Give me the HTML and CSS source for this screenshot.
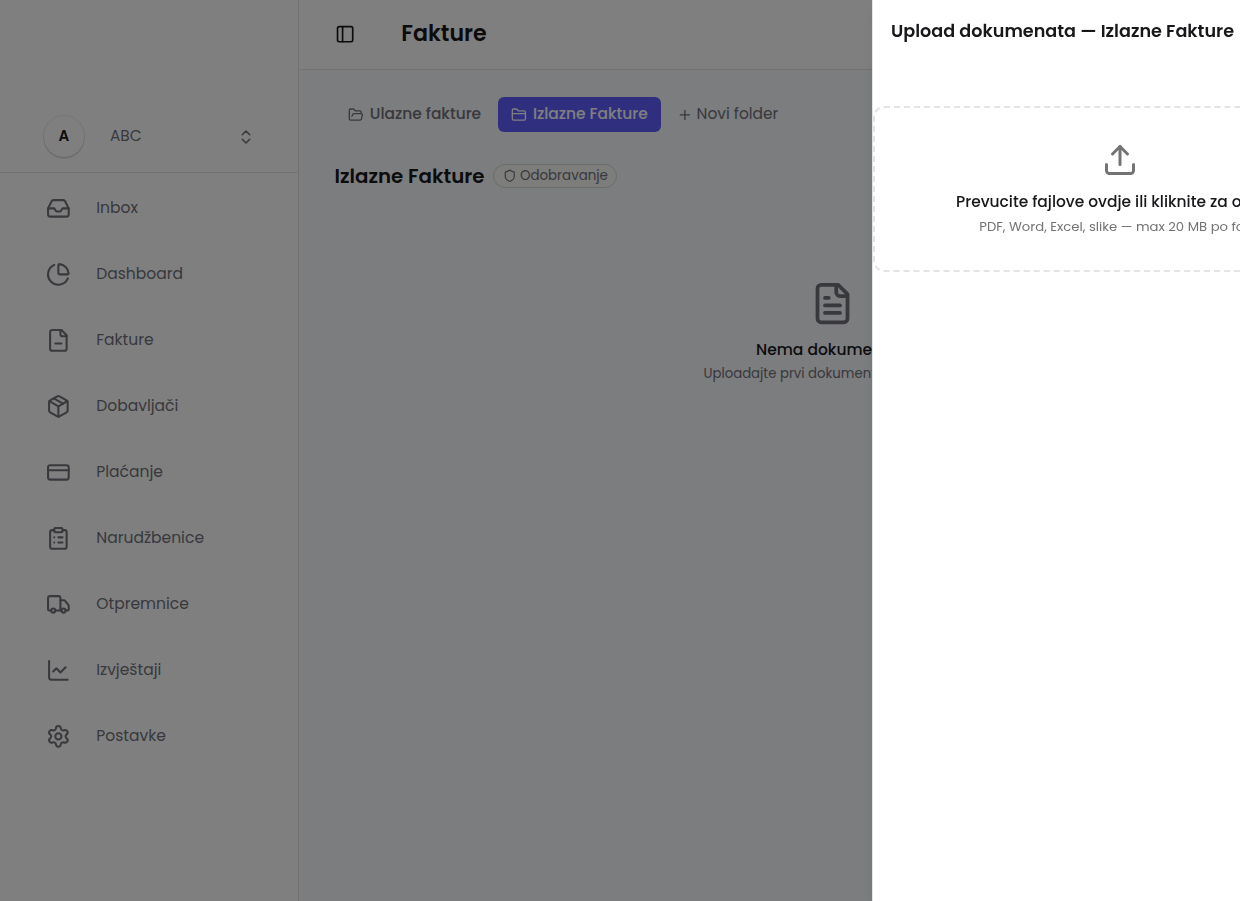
FILE: index.html
```
<!DOCTYPE html>
<html lang="bs">
<head>
    <meta charset="UTF-8">
    <meta name="viewport" content="width=device-width, initial-scale=1.0">
    <title>Fakture</title>
    <link rel="stylesheet" href="styles.css">
</head>
<body>
    <div class="app">
        <aside class="sidebar">
            <div class="company">
                <div class="avatar">A</div>
                <span class="company-name">ABC</span>
                <svg class="icon chevrons" viewBox="0 0 24 24"><path d="m7 15 5 5 5-5"/><path d="m7 9 5-5 5 5"/></svg>
            </div>
            <nav class="menu">
                <a class="menu-item">
                    <svg class="icon" viewBox="0 0 24 24"><path d="M22 12h-6l-2 3h-4l-2-3H2"/><path d="M5.45 5.11 2 12v6a2 2 0 0 0 2 2h16a2 2 0 0 0 2-2v-6l-3.45-6.89A2 2 0 0 0 16.76 4H7.24a2 2 0 0 0-1.79 1.11z"/></svg>
                    <span>Inbox</span>
                </a>
                <a class="menu-item">
                    <svg class="icon" viewBox="0 0 24 24"><path d="M21 12c.552 0 1.005-.449.95-.998a10 10 0 0 0-8.953-8.951c-.55-.055-.998.398-.998.95v8a1 1 0 0 0 1 1z"/><path d="M21.21 15.89A10 10 0 1 1 8 2.83"/></svg>
                    <span>Dashboard</span>
                </a>
                <a class="menu-item">
                    <svg class="icon" viewBox="0 0 24 24"><path d="M15 2H6a2 2 0 0 0-2 2v16a2 2 0 0 0 2 2h12a2 2 0 0 0 2-2V7z"/><path d="M14 2v4a2 2 0 0 0 2 2h4"/><path d="M9 15h6"/></svg>
                    <span>Fakture</span>
                </a>
                <a class="menu-item">
                    <svg class="icon" viewBox="0 0 24 24"><path d="M11 21.73a2 2 0 0 0 2 0l7-4A2 2 0 0 0 21 16V8a2 2 0 0 0-1-1.73l-7-4a2 2 0 0 0-2 0l-7 4A2 2 0 0 0 3 8v8a2 2 0 0 0 1 1.73z"/><path d="M12 22V12"/><path d="m3.3 7 8.7 5 8.7-5"/><path d="m7.5 4.27 9 5.15"/></svg>
                    <span>Dobavljači</span>
                </a>
                <a class="menu-item">
                    <svg class="icon" viewBox="0 0 24 24"><rect x="2" y="5" width="20" height="14" rx="2"/><path d="M2 10h20"/></svg>
                    <span>Plaćanje</span>
                </a>
                <a class="menu-item">
                    <svg class="icon" viewBox="0 0 24 24"><rect x="8" y="2" width="8" height="4" rx="1"/><path d="M16 4h2a2 2 0 0 1 2 2v14a2 2 0 0 1-2 2H6a2 2 0 0 1-2-2V6a2 2 0 0 1 2-2h2"/><path d="M12 11h4"/><path d="M12 16h4"/><path d="M8 11h.01"/><path d="M8 16h.01"/></svg>
                    <span>Narudžbenice</span>
                </a>
                <a class="menu-item">
                    <svg class="icon" viewBox="0 0 24 24"><path d="M14 18V6a2 2 0 0 0-2-2H4a2 2 0 0 0-2 2v11a1 1 0 0 0 1 1h2"/><path d="M15 18H9"/><path d="M19 18h2a1 1 0 0 0 1-1v-3.65a1 1 0 0 0-.22-.624l-3.48-4.35A1 1 0 0 0 17.52 8H14"/><circle cx="17" cy="18" r="2"/><circle cx="7" cy="18" r="2"/></svg>
                    <span>Otpremnice</span>
                </a>
                <a class="menu-item">
                    <svg class="icon" viewBox="0 0 24 24"><path d="M3 3v16a2 2 0 0 0 2 2h16"/><path d="m19 9-5 5-4-4-3 3"/></svg>
                    <span>Izvještaji</span>
                </a>
                <a class="menu-item">
                    <svg class="icon" viewBox="0 0 24 24"><path d="M9.671 4.136a2.34 2.34 0 0 1 4.659 0 2.34 2.34 0 0 0 3.319 1.915 2.34 2.34 0 0 1 2.33 4.033 2.34 2.34 0 0 0 0 3.831 2.34 2.34 0 0 1-2.33 4.033 2.34 2.34 0 0 0-3.319 1.915 2.34 2.34 0 0 1-4.659 0 2.34 2.34 0 0 0-3.32-1.915 2.34 2.34 0 0 1-2.33-4.033 2.34 2.34 0 0 0 0-3.831A2.34 2.34 0 0 1 6.35 6.051a2.34 2.34 0 0 0 3.319-1.915"/><circle cx="12" cy="12" r="3"/></svg>
                    <span>Postavke</span>
                </a>
            </nav>
        </aside>

        <main class="main">
            <header class="topbar">
                <svg class="icon toggle" viewBox="0 0 24 24"><rect x="3" y="3" width="18" height="18" rx="2"/><path d="M9 3v18"/></svg>
                <h1>Fakture</h1>
            </header>

            <section class="content">
                <div class="tabs">
                    <button class="tab">
                        <svg class="icon" viewBox="0 0 24 24"><path d="m6 14 1.5-2.9A2 2 0 0 1 9.24 10H20a2 2 0 0 1 1.94 2.5l-1.54 6a2 2 0 0 1-1.95 1.5H4a2 2 0 0 1-2-2V5a2 2 0 0 1 2-2h3.9a2 2 0 0 1 1.69.9l.81 1.2a2 2 0 0 0 1.67.9H18a2 2 0 0 1 2 2v2"/></svg>
                        <span>Ulazne fakture</span>
                    </button>
                    <button class="tab active">
                        <svg class="icon" viewBox="0 0 24 24"><path d="M20 20a2 2 0 0 0 2-2V8a2 2 0 0 0-2-2h-7.9a2 2 0 0 1-1.69-.9L9.6 3.9A2 2 0 0 0 7.93 3H4a2 2 0 0 0-2 2v13a2 2 0 0 0 2 2Z"/><path d="M2 10h20"/></svg>
                        <span>Izlazne Fakture</span>
                    </button>
                    <button class="tab new-folder">
                        <svg class="icon" viewBox="0 0 24 24"><path d="M5 12h14"/><path d="M12 5v14"/></svg>
                        <span>Novi folder</span>
                    </button>
                </div>

                <div class="folder-title">
                    <h2>Izlazne Fakture</h2>
                    <span class="badge">
                        <svg class="icon" viewBox="0 0 24 24"><path d="M20 13c0 5-3.5 7.5-7.66 8.95a1 1 0 0 1-.67-.01C7.5 20.5 4 18 4 13V6a1 1 0 0 1 1-1c2 0 4.5-1.2 6.24-2.72a1.17 1.17 0 0 1 1.52 0C14.51 3.81 17 5 19 5a1 1 0 0 1 1 1z"/></svg>
                        Odobravanje
                    </span>
                </div>

                <div class="empty">
                    <svg class="icon" viewBox="0 0 24 24"><path d="M15 2H6a2 2 0 0 0-2 2v16a2 2 0 0 0 2 2h12a2 2 0 0 0 2-2V7z"/><path d="M14 2v4a2 2 0 0 0 2 2h4"/><path d="M10 9H8"/><path d="M16 13H8"/><path d="M16 17H8"/></svg>
                    <p class="empty-title">Nema dokumenata</p>
                    <p class="empty-text">Uploadajte prvi dokument u ovaj folder</p>
                </div>
            </section>
        </main>
    </div>

    <div class="overlay"></div>

    <div class="drawer">
        <h2 class="drawer-title">Upload dokumenata — Izlazne Fakture</h2>
        <div class="dropzone">
            <svg class="icon" viewBox="0 0 24 24"><path d="M12 3v12"/><path d="m17 8-5-5-5 5"/><path d="M21 15v4a2 2 0 0 1-2 2H5a2 2 0 0 1-2-2v-4"/></svg>
            <p class="drop-title">Prevucite fajlove ovdje ili kliknite za odabir</p>
            <p class="drop-text">PDF, Word, Excel, slike — max 20 MB po fajlu</p>
        </div>
    </div>
</body>
</html>
```
FILE: styles.css
```
* {
    margin: 0;
    padding: 0;
    box-sizing: border-box;
}

body {
    font-family: 'Poppins', 'Inter', sans-serif;
    color: #18181b;
    height: 100vh;
    overflow: hidden;
}

.app {
    display: flex;
    width: 1366px;
    height: 100vh;
}

.icon {
    width: 24.75px;
    height: 24.75px;
    flex-shrink: 0;
    fill: none;
    stroke: currentColor;
    stroke-width: 2;
    stroke-linecap: round;
    stroke-linejoin: round;
}

/* Sidebar */
.sidebar {
    width: 299px;
    flex-shrink: 0;
    background: #fff;
    border-right: 1px solid #e4e4e7;
    color: #71717a;
}

.company {
    display: flex;
    align-items: center;
    height: 173px;
    padding: 115px 43px 14px 43.5px;
    border-bottom: 1px solid #e4e4e7;
}

.avatar {
    display: flex;
    align-items: center;
    justify-content: center;
    width: 40.5px;
    height: 40.5px;
    padding-bottom: 2px;
    border-radius: 50%;
    color: #18181b;
    font-size: 15px;
    font-weight: 600;
    box-shadow: 0 0 0 1px rgba(0, 0, 0, 0.06), 0 1px 2px rgba(0, 0, 0, 0.2);
}

.company-name {
    margin-left: 26px;
    padding-bottom: 2px;
    font-size: 15.4px;
}

.chevrons {
    width: 18px;
    height: 18px;
    margin-left: auto;
}

.menu {
    display: flex;
    flex-direction: column;
    padding-top: 2px;
}

.menu-item {
    display: flex;
    align-items: center;
    gap: 26px;
    height: 66px;
    padding-left: 45.5px;
    font-size: 15.55px;
}

.menu-item span {
    padding-bottom: 2px;
}

/* Main */
.main {
    flex-grow: 1;
    background: #f8fafc;
}

.topbar {
    display: flex;
    align-items: center;
    gap: 46px;
    height: 70px;
    padding-left: 36px;
    background: #fff;
    border-bottom: 1px solid #e4e4e7;
}

.toggle {
    width: 20.25px;
    height: 20.25px;
}

h1 {
    padding-bottom: 2px;
    font-size: 22.1px;
    font-weight: 600;
}

.content {
    padding: 27px 36px;
}

.tabs {
    display: flex;
    gap: 4px;
}

.tab {
    display: flex;
    align-items: center;
    gap: 6px;
    height: 35px;
    padding: 0 13px;
    border: none;
    border-radius: 6px;
    background: none;
    color: #71717a;
    font-family: inherit;
    font-size: 15.45px;
    font-weight: 500;
}

.tab span {
    padding-bottom: 2px;
}

.tab .icon {
    width: 15.75px;
    height: 15.75px;
}

.tab.active {
    background: #615fff;
    color: #fff;
}

.new-folder {
    gap: 4px;
    padding-left: 12px;
    font-weight: 400;
}

.folder-title {
    display: flex;
    align-items: center;
    gap: 9px;
    height: 30px;
    margin-top: 29px;
    margin-left: -0.5px;
}

h2 {
    font-size: 19.8px;
    font-weight: 600;
}

.badge {
    display: flex;
    align-items: center;
    gap: 3.5px;
    height: 24px;
    padding: 0 8.5px;
    border: 1px solid #d8d8d6;
    border-radius: 12px;
    background: #fafaf7;
    color: #71717a;
    font-size: 13.4px;
}

.badge .icon {
    width: 13.5px;
    height: 13.5px;
}

.empty {
    display: flex;
    flex-direction: column;
    align-items: center;
    padding-top: 90px;
    color: #71717a;
}

.empty .icon {
    width: 45px;
    height: 45px;
}

.empty-title {
    margin-top: 11px;
    color: #18181b;
    font-size: 15.5px;
    font-weight: 500;
    line-height: 25px;
}

.empty-text {
    margin-top: 1px;
    font-size: 13.25px;
    line-height: 22px;
}

/* Drawer */
.overlay {
    position: fixed;
    inset: 0;
    background: rgba(0, 0, 0, 0.5);
}

.drawer {
    position: fixed;
    top: 0;
    left: 872px;
    width: 494px;
    height: 100vh;
    background: #fff;
    border-left: 1px solid #e4e4e7;
    box-shadow: 0 10px 15px -3px rgba(0, 0, 0, 0.1), 0 4px 6px -4px rgba(0, 0, 0, 0.1);
}

.drawer-title {
    padding: 18px;
    font-size: 17.6px;
    line-height: 26px;
    white-space: nowrap;
}

.dropzone {
    display: flex;
    flex-direction: column;
    align-items: center;
    height: 166px;
    margin-top: 44px;
    padding-top: 34px;
    border: 2px dashed #e4e4e7;
    border-radius: 11px;
}

.dropzone .icon {
    width: 36px;
    height: 36px;
    color: #737373;
}

.drop-title {
    margin-top: 11px;
    font-size: 15.45px;
    font-weight: 500;
    line-height: 25px;
}

.drop-text {
    margin-top: 2px;
    color: #737373;
    font-size: 13.2px;
    line-height: 22px;
}
```
